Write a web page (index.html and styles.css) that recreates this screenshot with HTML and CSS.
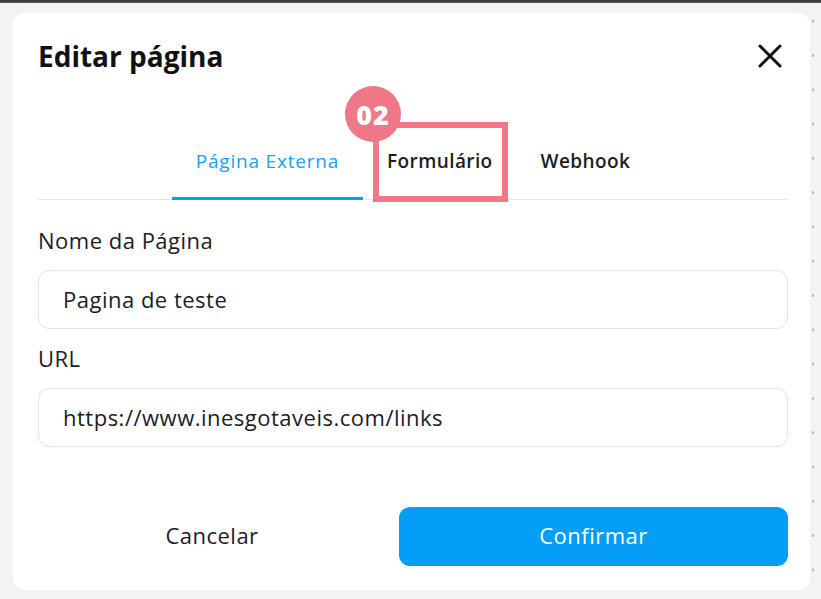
FILE: index.html
```html
<!DOCTYPE html>
<html lang="pt">
<head>
<meta charset="utf-8">
<title>Editar página</title>
<link rel="stylesheet" href="styles.css">
</head>
<body>
<div class="topbar"></div>
<div class="screen">
  <div class="stage">
    <div class="modal">
      <div class="modal-head">
        <h1 class="title">Editar página</h1>
        <button class="close" aria-label="Fechar">
          <svg width="24" height="24" viewBox="0 0 24 24"><path d="M2 2 L22 22 M22 2 L2 22" stroke="#111" stroke-width="3" stroke-linecap="round" fill="none"/></svg>
        </button>
      </div>
      <div class="tabs">
        <div class="tab active">Página Externa</div>
        <div class="tab">Formulário</div>
        <div class="tab">Webhook</div>
      </div>
      <div class="form">
        <label class="label">Nome da Página</label>
        <div class="input">Pagina de teste</div>
        <label class="label">URL</label>
        <div class="input">https://www.inesgotaveis.com/links</div>
      </div>
      <div class="actions">
        <button class="btn-cancel">Cancelar</button>
        <button class="btn-confirm">Confirmar</button>
      </div>
      <div class="highlight"></div>
      <div class="badge">02</div>
    </div>
  </div>
  <div class="rail"></div>
</div>
</body>
</html>
```
FILE: styles.css
```css
* { box-sizing: border-box; }
html, body { margin: 0; padding: 0; }
body {
  width: 821px;
  height: 599px;
  overflow: hidden;
  background: #f3f3f3;
  font-family: "Open Sans", "Noto Sans", sans-serif;
  color: #1c1c24;
}
.topbar {
  height: 3px;
  background: linear-gradient(#2e2e2e, #5a5a5a);
}
.screen {
  display: flex;
}
.stage {
  padding: 10px 0 0 13px;
}
.modal {
  position: relative;
  width: 797px;
  height: 577px;
  background: #fff;
  border-radius: 12px;
  padding: 0 22px 0 25px;
  display: flex;
  flex-direction: column;
}
.modal-head {
  display: flex;
  justify-content: space-between;
  align-items: center;
  height: 88px;
  padding-bottom: 3px;
}
.title {
  margin: 0;
  font-size: 28px;
  font-weight: 700;
  color: #111;
}
.close {
  border: 0;
  background: none;
  padding: 0;
  margin-right: 6px;
  width: 24px;
  height: 24px;
  display: flex;
}
.tabs {
  display: flex;
  justify-content: center;
  border-bottom: 1px solid #e6e6ea;
  height: 99px;
  align-items: flex-end;
}
.tab {
  padding: 4px 24px 0;
  height: 56px;
  font-size: 19px;
  font-weight: 600;
  letter-spacing: 0.4px;
  color: #1c1c24;
  display: flex;
  align-items: flex-start;
  margin-bottom: -1px;
  border-bottom: 3px solid transparent;
}
.tab.active {
  color: #1aa0f3;
  font-weight: 500;
  letter-spacing: 0.8px;
  border-bottom-color: #0a9ef6;
}
.form {
  display: flex;
  flex-direction: column;
  padding-top: 28px;
}
.label {
  font-size: 22px;
  letter-spacing: 0.5px;
  color: #1c1c24;
  line-height: 24px;
  margin-bottom: 18px;
}
.input {
  height: 59px;
  border: 1.5px solid #e2e2e8;
  border-radius: 11px;
  padding: 0 24px 2px;
  display: flex;
  align-items: center;
  font-size: 22px;
  letter-spacing: 0.5px;
  color: #1c1c24;
  margin-bottom: 17px;
}
.actions {
  display: flex;
  gap: 13px;
  margin-top: 43px;
}
.btn-cancel {
  width: 348px;
  height: 59px;
  border: 0;
  background: none;
  padding: 0 0 4px;
  font-family: inherit;
  font-size: 22px;
  letter-spacing: 0.5px;
  color: #1c1c24;
}
.btn-confirm {
  flex: 1;
  height: 59px;
  border: 0;
  border-radius: 11px;
  background: #049df7;
  color: #fff;
  padding: 0 0 4px;
  font-family: inherit;
  font-size: 22px;
  font-weight: 500;
  letter-spacing: 0.5px;
}
.highlight {
  position: absolute;
  left: 360px;
  top: 109px;
  width: 135px;
  height: 80px;
  border: 6px solid #ef7787;
}
.badge {
  position: absolute;
  left: 332px;
  top: 73px;
  width: 56px;
  height: 56px;
  border-radius: 50%;
  background: #ef7787;
  color: #fff;
  font-size: 27px;
  font-weight: 800;
  display: flex;
  align-items: center;
  justify-content: center;
  letter-spacing: 1px;
}
.rail {
  width: 11px;
  height: 596px;
  background-image: radial-gradient(circle, #b9b9b9 1px, transparent 1.6px);
  background-size: 6px 34.3px;
  background-repeat: repeat-y;
  background-position: 0px 1px;
}
```
